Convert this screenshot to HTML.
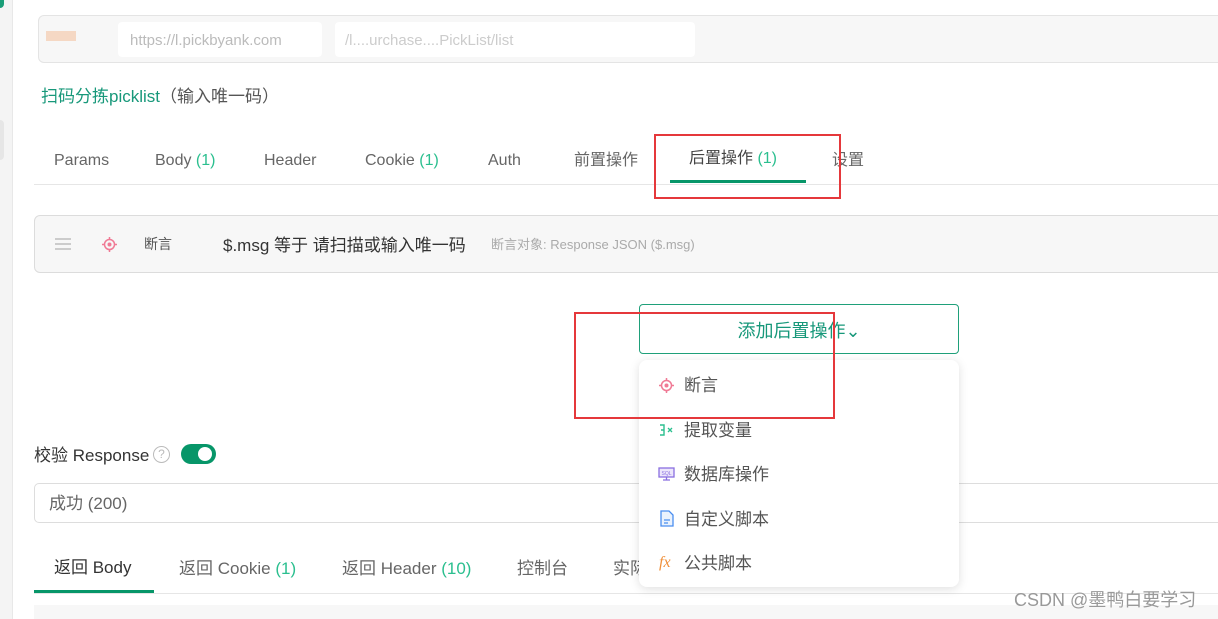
<!DOCTYPE html>
<html><head><meta charset="utf-8"><style>
*{margin:0;padding:0;box-sizing:border-box}
body{width:1218px;height:619px;overflow:hidden;background:#fff;font-family:"Liberation Sans","Noto Sans CJK SC",sans-serif;position:relative;color:#333;line-height:1}
.a{position:absolute;white-space:nowrap;line-height:1}
.g{color:#2bbf8f}
.tab{position:absolute;top:153px;font-size:16px;color:#666;line-height:1;white-space:nowrap}
.btab{position:absolute;top:560px;font-size:17px;color:#666;line-height:1;white-space:nowrap}
.mi{position:absolute;left:684px;font-size:17px;color:#555;line-height:1}
</style></head><body>
<div class="a" style="left:0;top:0;width:13px;height:619px;background:#f4f4f4;border-right:1px solid #e8e8e8"></div>
<div class="a" style="left:0;top:0;width:4px;height:8px;background:#1a9e78;border-radius:0 0 4px 0"></div>
<div class="a" style="left:0;top:120px;width:4px;height:40px;background:#e6e6e6;border-radius:0 4px 4px 0"></div>

<div class="a" style="left:38px;top:15px;width:1200px;height:48px;background:#f7f7f7;border:1px solid #e4e4e4;border-radius:6px"></div>
<div class="a" style="left:46px;top:31px;width:30px;height:10px;background:#f5d8c4"></div>
<div class="a" style="left:118px;top:22px;width:204px;height:35px;background:#fff;border-radius:4px"></div>
<div class="a" style="left:130px;top:33px;font-size:15px;color:#bbb">https://l.pickbyank.com</div>
<div class="a" style="left:335px;top:22px;width:360px;height:35px;background:#fff;border-radius:4px"></div>
<div class="a" style="left:345px;top:33px;font-size:15px;color:#ccc">/l....urchase....PickList/list</div>

<div class="a" style="left:41px;top:88px;font-size:17px"><span style="color:#17987a">扫码分拣picklist</span><span style="color:#555">（输入唯一码）</span></div>

<div class="tab" style="left:54px">Params</div>
<div class="tab" style="left:155px">Body <span class="g">(1)</span></div>
<div class="tab" style="left:264px">Header</div>
<div class="tab" style="left:365px">Cookie <span class="g">(1)</span></div>
<div class="tab" style="left:488px">Auth</div>
<div class="tab" style="left:574px">前置操作</div>
<div class="tab" style="left:689px;color:#444;top:151px">后置操作 <span class="g">(1)</span></div>
<div class="tab" style="left:832px">设置</div>
<div class="a" style="left:34px;top:184px;width:1184px;height:1px;background:#e6e6e6"></div>
<div class="a" style="left:670px;top:180px;width:136px;height:3px;background:#079669"></div>
<div class="a" style="left:654px;top:134px;width:187px;height:65px;border:2px solid #e5383b"></div>

<div class="a" style="left:34px;top:215px;width:1200px;height:58px;background:#f7f7f7;border:1px solid #dcdcdc;border-radius:6px"></div>
<div class="a" style="left:55px;top:238px;width:16px;height:2px;background:#ccc;box-shadow:0 5px 0 #ccc,0 10px 0 #ccc"></div>
<svg class="a" style="left:101px;top:236px" width="17" height="17" viewBox="0 0 17 17"><circle cx="8.5" cy="8.5" r="5" fill="none" stroke="#f07a95" stroke-width="1.5"/><circle cx="8.5" cy="8.5" r="2" fill="#f07a95"/><path d="M8.5 1v3M8.5 13v3M1 8.5h3M13 8.5h3" stroke="#f07a95" stroke-width="1.5"/></svg>
<div class="a" style="left:144px;top:237px;font-size:14px;color:#555">断言</div>
<div class="a" style="left:223px;top:237px;font-size:17px;color:#333">$.msg 等于 请扫描或输入唯一码</div>
<div class="a" style="left:491px;top:238px;font-size:13px;color:#aaa">断言对象: Response JSON ($.msg)</div>

<div class="a" style="left:639px;top:304px;width:320px;height:50px;border:1px solid #1fa07a;border-radius:4px"></div>
<div class="a" style="left:639px;top:322px;width:320px;text-align:center;font-size:18px;color:#17987a">添加后置操作⌄</div>

<div class="a" style="left:34px;top:447px;font-size:17px;color:#333">校验 Response</div>
<div class="a" style="left:153px;top:446px;width:17px;height:17px;border:1px solid #bbb;border-radius:50%;font-size:12px;color:#bbb;text-align:center;line-height:15px">?</div>
<div class="a" style="left:181px;top:444px;width:35px;height:20px;background:#079669;border-radius:10px"></div>
<div class="a" style="left:198px;top:447px;width:14px;height:14px;background:#fff;border-radius:50%"></div>

<div class="a" style="left:34px;top:483px;width:1200px;height:40px;border:1px solid #ddd;border-radius:5px"></div>
<div class="a" style="left:49px;top:495px;font-size:17px;color:#666">成功 (200)</div>

<div class="btab" style="left:54px;color:#333;top:559px">返回 Body</div>
<div class="btab" style="left:179px">返回 Cookie <span class="g">(1)</span></div>
<div class="btab" style="left:342px">返回 Header <span class="g">(10)</span></div>
<div class="btab" style="left:517px">控制台</div>
<div class="btab" style="left:613px">实际</div>
<div class="a" style="left:34px;top:593px;width:1184px;height:1px;background:#e6e6e6"></div>
<div class="a" style="left:34px;top:590px;width:120px;height:3px;background:#079669"></div>
<div class="a" style="left:34px;top:605px;width:1184px;height:14px;background:#f7f7f7"></div>

<div class="a" style="left:639px;top:360px;width:320px;height:227px;background:#fff;border-radius:8px;box-shadow:0 2px 10px rgba(0,0,0,.13)"></div>
<svg class="a" style="left:658px;top:377px" width="17" height="17" viewBox="0 0 17 17"><circle cx="8.5" cy="8.5" r="5" fill="none" stroke="#f07a95" stroke-width="1.5"/><circle cx="8.5" cy="8.5" r="2" fill="#f07a95"/><path d="M8.5 1v3M8.5 13v3M1 8.5h3M13 8.5h3" stroke="#f07a95" stroke-width="1.5"/></svg>
<div class="mi" style="top:377px">断言</div>
<svg class="a" style="left:658px;top:422px" width="18" height="16" viewBox="0 0 18 16"><path d="M2 3h4v10H2M3 8h3" fill="none" stroke="#2bbf8f" stroke-width="1.4"/><path d="M10 6l4 4M14 6l-4 4" stroke="#2bbf8f" stroke-width="1.3"/></svg>
<div class="mi" style="top:422px">提取变量</div>
<svg class="a" style="left:658px;top:466px" width="17" height="16" viewBox="0 0 17 16"><rect x="1" y="2" width="15" height="9" fill="#ece6fb" stroke="#8a6fe0" stroke-width="1.3"/><path d="M8.5 11v3M5 14h7" stroke="#8a6fe0" stroke-width="1.3"/><text x="8.5" y="9" font-size="5" text-anchor="middle" fill="#8a6fe0" font-family="Liberation Sans">SQL</text></svg>
<div class="mi" style="top:466px">数据库操作</div>
<svg class="a" style="left:660px;top:510px" width="14" height="17" viewBox="0 0 14 17"><path d="M1 1h8l4 4v11H1z" fill="#eaf2fd" stroke="#4a8ef0" stroke-width="1.3"/><path d="M4 10h6M4 13h4" stroke="#4a8ef0" stroke-width="1.2"/></svg>
<div class="mi" style="top:511px">自定义脚本</div>
<div class="a" style="left:659px;top:555px;font-size:16px;font-style:italic;color:#f0903a;font-family:'Liberation Serif',serif">fx</div>
<div class="mi" style="top:555px">公共脚本</div>

<div class="a" style="left:574px;top:312px;width:261px;height:107px;border:2px solid #e5383b"></div>

<div class="a" style="left:1014px;top:591px;font-size:18px;color:#999">CSDN @墨鸭白要学习</div>
</body></html>
